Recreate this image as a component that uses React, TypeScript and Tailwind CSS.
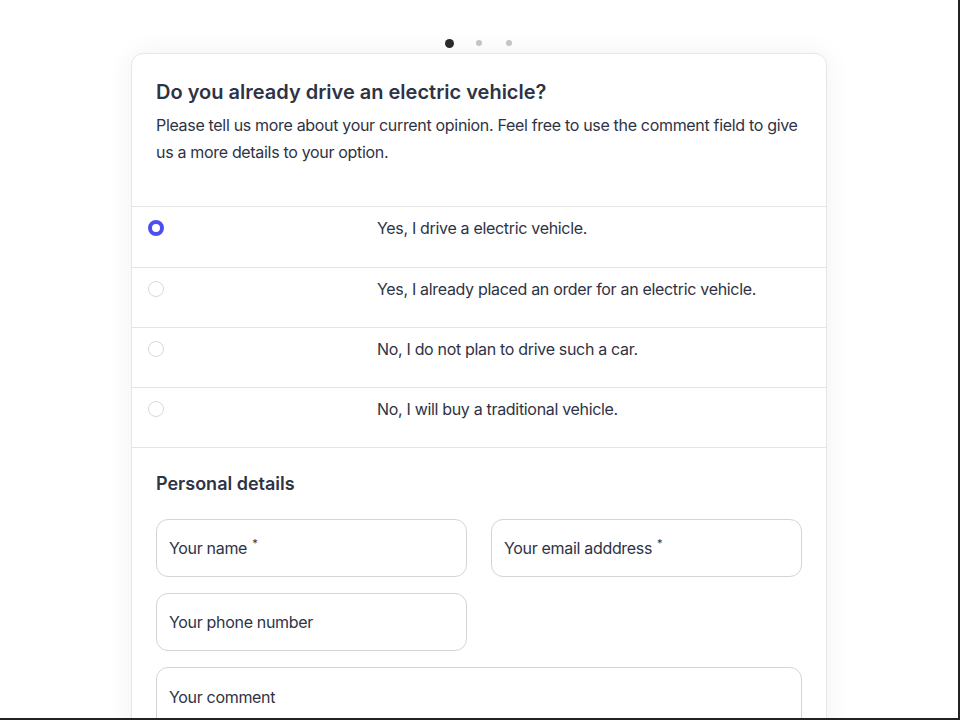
const options = [
  'Yes, I drive a electric vehicle.',
  'Yes, I already placed an order for an electric vehicle.',
  'No, I do not plan to drive such a car.',
  'No, I will buy a traditional vehicle.',
];

function Field({ label, required }: { label: string; required?: boolean }) {
  return (
    <div className="h-[58px] rounded-xl border border-[#d4d4d8] bg-white px-3 flex items-center text-[16px] tracking-[-0.02em] text-[#2e3345]">
      <span>{label}</span>
      {required && <span className="ml-[5px] -mt-[10px] text-[11px] leading-none">*</span>}
    </div>
  );
}

export default function App() {
  const selected = 0;
  return (
    <div
      className="w-[960px] h-[720px] overflow-hidden bg-white border-r-2 border-b-2 border-[#222]"
      style={{ fontFamily: 'Inter, "Noto Sans", sans-serif' }}
    >
      <div className="flex justify-center pt-[39px] pb-[6px]">
        {[0, 1, 2].map((i) => (
          <div key={i} className="w-[30px] h-[8px] flex items-center justify-center">
            <span
              className={
                i === 0
                  ? 'w-[9px] h-[9px] rounded-full bg-[#2a2a2a]'
                  : 'w-[6px] h-[6px] rounded-full bg-[#c4c4c4]'
              }
            />
          </div>
        ))}
      </div>

      <div className="mx-auto w-[696px] rounded-xl border border-[#e6e6ea] bg-white shadow-[0_0_28px_rgba(0,0,0,0.06)]">
        <div className="px-6 pt-6 pb-10">
          <h1 className="text-[20px] leading-7 font-semibold text-[#2e3345]">
            Do you already drive an electric vehicle?
          </h1>
          <p className="mt-[6px] text-[16px] leading-[27px] tracking-[-0.02em] text-[#2e3345]">
            Please tell us more about your current opinion. Feel free to use the comment field to give us a more
            details to your option.
          </p>
        </div>

        {options.map((o, i) => (
          <label key={o} className={`flex border-t border-[#e5e5e8] pt-[9px] ${i === 0 ? 'h-[61px]' : 'h-[60px]'}`}>
            <div className="w-[245px] pl-4 pt-[4px] shrink-0">
              {i === selected ? (
                <span className="block w-4 h-4 rounded-full border-[4.5px] border-[#4b4ff0] bg-white" />
              ) : (
                <span className="block w-4 h-4 rounded-full border border-[#d9d9dd] bg-white" />
              )}
            </div>
            <span className="text-[16px] leading-6 tracking-[-0.02em] text-[#2e3345]">{o}</span>
          </label>
        ))}

        <div className="border-t border-[#e5e5e8] px-6 pt-[22px] pb-8">
          <h2 className="text-[18px] leading-7 font-semibold text-[#2e3345]">Personal details</h2>
          <div className="mt-[21px] grid grid-cols-2 gap-x-6 gap-y-4">
            <Field label="Your name" required />
            <Field label="Your email adddress" required />
            <Field label="Your phone number" />
            <div />
            <div className="col-span-2 h-[120px] rounded-xl border border-[#d4d4d8] bg-white px-3 pt-[17px] text-[16px] tracking-[-0.02em] text-[#2e3345]">
              Your comment
            </div>
          </div>
        </div>
      </div>
    </div>
  );
}
